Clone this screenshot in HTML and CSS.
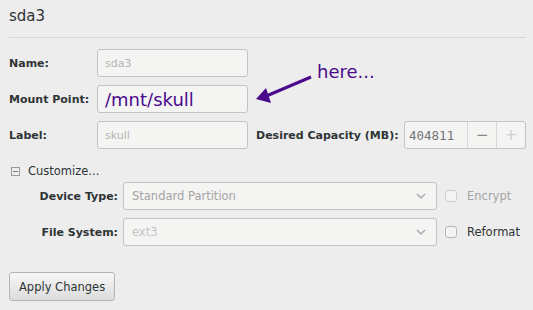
FILE: index.html
```html
<!DOCTYPE html>
<html lang="en">
<head>
    <meta charset="UTF-8">
    <title>sda3</title>
    <link rel="stylesheet" href="styles.css">
</head>
<body>
    <div class="header">
        <h1>sda3</h1>
    </div>

    <div class="form">
        <label class="field-label">Name:</label>
        <div class="entry disabled">sda3</div>
        <div></div>
        <div></div>

        <label class="field-label">Mount Point:</label>
        <div class="entry mount">/mnt/skull</div>
        <div></div>
        <div></div>

        <label class="field-label">Label:</label>
        <div class="entry disabled">skull</div>
        <label class="field-label">Desired Capacity (MB):</label>
        <div class="spin">
            <span class="spin-value">404811</span>
            <span class="spin-btn">&minus;</span>
            <span class="spin-btn off">+</span>
        </div>
    </div>

    <div class="customize">
        <span class="expander"></span>
        <span>Customize...</span>
    </div>

    <div class="custom-grid">
        <label class="field-label right">Device Type:</label>
        <div class="combo">
            <span>Standard Partition</span>
            <svg width="10" height="6" viewBox="0 0 10 6"><path d="M1 1 L5 5 L9 1" fill="none" stroke="#a8a8a8" stroke-width="1.4"/></svg>
        </div>
        <div class="check off"><span class="box"></span>Encrypt</div>

        <label class="field-label right">File System:</label>
        <div class="combo">
            <span class="faint">ext3</span>
            <svg width="10" height="6" viewBox="0 0 10 6"><path d="M1 1 L5 5 L9 1" fill="none" stroke="#a8a8a8" stroke-width="1.4"/></svg>
        </div>
        <div class="check"><span class="box"></span>Reformat</div>
    </div>

    <div class="actions">
        <button>Apply Changes</button>
    </div>

    <!-- annotation drawn on top of the dialog -->
    <svg class="arrow" width="70" height="40" viewBox="0 0 70 40">
        <line x1="61" y1="5" x2="14" y2="25" stroke="#4b0a8c" stroke-width="3"/>
        <polygon points="6,27 16,16 21,31" fill="#4b0a8c"/>
    </svg>
    <div class="note">here...</div>
</body>
</html>
```

FILE: styles.css
```css
body {
    margin: 0;
    background-color: #ededed;
    font-family: "DejaVu Sans", sans-serif;
    font-size: 11px;
    color: #2e3436;
    position: relative;
    width: 533px;
    height: 310px;
    overflow: hidden;
}

.header {
    margin: 0 7px 0 9px;
    padding: 6px 0 11px 0;
    border-bottom: 1px solid #d6d6d6;
}

h1 {
    margin: 0;
    font-size: 15px;
    font-weight: normal;
    line-height: 20px;
}

.form {
    display: grid;
    grid-template-columns: 80px 151px 140px 122px;
    grid-auto-rows: 28px;
    column-gap: 8px;
    row-gap: 8px;
    margin: 11px 0 0 9px;
}

.field-label {
    font-weight: bold;
    display: flex;
    align-items: center;
    white-space: nowrap;
}

.field-label.right {
    justify-content: flex-end;
}

.entry {
    box-sizing: border-box;
    border: 1px solid #c3c3c3;
    border-radius: 3px;
    background-color: #f4f4f3;
    display: flex;
    align-items: center;
    padding-left: 7px;
}

.entry.disabled {
    color: #b4b4b4;
}

.entry.mount {
    color: #4b0a8c;
    font-size: 18px;
}

.spin {
    box-sizing: border-box;
    border: 1px solid #c3c3c3;
    border-radius: 3px;
    background-color: #f4f4f3;
    display: flex;
}

.spin-value {
    width: 64px;
    display: flex;
    align-items: center;
    padding-left: 4px;
    font-family: "DejaVu Sans Mono", monospace;
    font-size: 12.5px;
    color: #747474;
    border-right: 1px solid #d8d8d8;
    box-sizing: border-box;
}

.spin-btn {
    width: 28px;
    display: flex;
    align-items: center;
    justify-content: center;
    font-size: 15px;
    color: #8a8a8a;
    border-right: 1px solid #d8d8d8;
}

.spin-btn.off {
    border-right: none;
    color: #cfcfcf;
}

.customize {
    display: flex;
    align-items: center;
    gap: 8px;
    height: 14px;
    margin: 15px 0 0 11px;
    font-size: 11.5px;
}

.expander {
    width: 7px;
    height: 7px;
    border: 1px solid #9a9a9a;
    position: relative;
}

.expander::after {
    content: "";
    position: absolute;
    left: 1px;
    right: 1px;
    top: 3px;
    height: 1px;
    background-color: #7a7a7a;
}

.custom-grid {
    display: grid;
    grid-template-columns: 79px 314px auto;
    grid-auto-rows: 28px;
    column-gap: 5px;
    row-gap: 8px;
    margin: 4px 0 0 39px;
}

.combo {
    box-sizing: border-box;
    border: 1px solid #c3c3c3;
    border-radius: 3px;
    background-color: #f4f4f3;
    display: flex;
    align-items: center;
    justify-content: space-between;
    padding: 0 10px 0 8px;
    color: #a4a4a4;
    font-size: 11.5px;
}

.combo .faint {
    color: #c4c4c4;
}

.check {
    display: flex;
    align-items: center;
    gap: 10px;
    margin-left: 3px;
    font-size: 11.5px;
}

.check.off {
    color: #a4a4a4;
}

.box {
    width: 10px;
    height: 10px;
    border: 1px solid #b4b4b4;
    border-radius: 3px;
    background-color: #f4f4f4;
}

.check.off .box {
    border-color: #cdcdcd;
}

.actions {
    margin: 26px 0 0 9px;
}

button {
    height: 29px;
    padding: 0 9px;
    font-family: "DejaVu Sans", sans-serif;
    font-size: 11.5px;
    color: #2e3436;
    background: linear-gradient(#f7f7f7, #dcdcdc);
    border: 1px solid #b6b6b6;
    border-radius: 3px;
}

.arrow {
    position: absolute;
    left: 250px;
    top: 72px;
}

.note {
    position: absolute;
    left: 317px;
    top: 61px;
    font-size: 18px;
    color: #4b0a8c;
}
```
